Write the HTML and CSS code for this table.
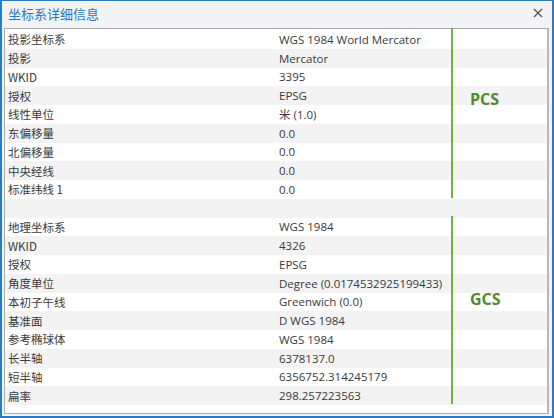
FILE: index.html
```html
<!DOCTYPE html>
<html lang="zh-CN">
<head>
<meta charset="utf-8">
<link rel="stylesheet" href="styles.css">
</head>
<body>
<div class="window">
  <div class="titlebar">
    <span class="title">坐标系详细信息</span>
    <svg class="close" width="10" height="10" viewBox="0 0 10 10"><path d="M1 1L9 9M9 1L1 9" stroke="#555" stroke-width="1.3"/></svg>
  </div>
  <div class="panel">
    <div class="rows">
      <div class="row"><span class="k">投影坐标系</span><span class="v">WGS 1984 World Mercator</span></div>
      <div class="row"><span class="k">投影</span><span class="v">Mercator</span></div>
      <div class="row"><span class="k">WKID</span><span class="v">3395</span></div>
      <div class="row"><span class="k">授权</span><span class="v">EPSG</span></div>
      <div class="row"><span class="k">线性单位</span><span class="v">米 (1.0)</span></div>
      <div class="row"><span class="k">东偏移量</span><span class="v">0.0</span></div>
      <div class="row"><span class="k">北偏移量</span><span class="v">0.0</span></div>
      <div class="row"><span class="k">中央经线</span><span class="v">0.0</span></div>
      <div class="row"><span class="k">标准纬线 1</span><span class="v">0.0</span></div>
      <div class="row"><span class="k"></span><span class="v"></span></div>
      <div class="row"><span class="k">地理坐标系</span><span class="v">WGS 1984</span></div>
      <div class="row"><span class="k">WKID</span><span class="v">4326</span></div>
      <div class="row"><span class="k">授权</span><span class="v">EPSG</span></div>
      <div class="row"><span class="k">角度单位</span><span class="v">Degree (0.0174532925199433)</span></div>
      <div class="row"><span class="k">本初子午线</span><span class="v">Greenwich (0.0)</span></div>
      <div class="row"><span class="k">基准面</span><span class="v">D WGS 1984</span></div>
      <div class="row"><span class="k">参考椭球体</span><span class="v">WGS 1984</span></div>
      <div class="row"><span class="k">长半轴</span><span class="v">6378137.0</span></div>
      <div class="row"><span class="k">短半轴</span><span class="v">6356752.314245179</span></div>
      <div class="row"><span class="k">扁率</span><span class="v">298.257223563</span></div>
    </div>
    <div class="mark mark-pcs"></div>
    <div class="mark mark-gcs"></div>
    <span class="tag tag-pcs">PCS</span>
    <span class="tag tag-gcs">GCS</span>
  </div>
</div>
</body>
</html>
```

FILE: styles.css
```css
html, body {
  margin: 0;
  padding: 0;
}
body {
  width: 554px;
  height: 418px;
  overflow: hidden;
  font-family: "Open Sans", "Noto Sans CJK SC", sans-serif;
}
.window {
  box-sizing: border-box;
  width: 554px;
  height: 418px;
  border: 2px solid #2b7bc4;
  border-top-width: 1px;
  background: #f2f3f5;
  display: flex;
  flex-direction: column;
}
.titlebar {
  height: 27px;
  flex: none;
  display: flex;
  align-items: center;
  justify-content: space-between;
  padding: 0 9px 0 6px;
}
.title {
  font-family: "Noto Sans CJK SC", sans-serif;
  font-size: 13px;
  color: #2a7ac0;
  margin-top: -2px;
}
.close {
  margin-top: -3px;
}
.panel {
  position: relative;
  margin: 0 3px 2px 2px;
  flex: 1;
  background: #fff;
  border: 1px solid #ababab;
  border-right: 2px solid #b8b8b8;
}
.rows {
  padding-top: 1px;
}
.row {
  height: 18.75px;
  display: flex;
  align-items: center;
  font-size: 11.5px;
  color: #3a3a3a;
}
.row:nth-child(even) {
  background: #f3f3f3;
}
.k {
  width: 271px;
  padding-left: 3px;
  font-family: "Noto Sans CJK SC", sans-serif;
}
.v {
  font-family: "Open Sans", "Noto Sans CJK SC", sans-serif;
}
.mark {
  position: absolute;
  left: 446px;
  width: 2px;
  background: #6cb33f;
}
.mark-pcs {
  top: -1px;
  height: 170px;
}
.mark-gcs {
  top: 187px;
  height: 188px;
}
.tag {
  position: absolute;
  left: 465px;
  font-family: "Open Sans", sans-serif;
  font-weight: bold;
  font-size: 16px;
  color: #4f8a2b;
}
.tag-pcs {
  top: 59px;
}
.tag-gcs {
  top: 259px;
}
```
